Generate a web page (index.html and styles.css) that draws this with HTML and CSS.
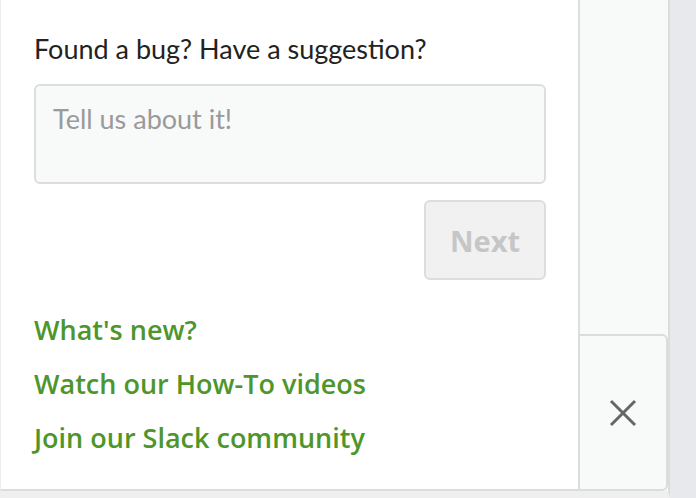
FILE: index.html
```html
<!DOCTYPE html>
<html lang="en">
<head>
    <meta charset="UTF-8">
    <meta name="viewport" content="width=device-width, initial-scale=1.0">
    <title>Feedback</title>
    <link rel="stylesheet" href="styles.css">
</head>
<body>
    <div class="page">
        <div class="sidebar">
            <div class="panel">
                <form class="feedback">
                    <label for="feedbackText" class="feedback-title">Found a bug? Have a suggestion?</label>
                    <textarea id="feedbackText" placeholder="Tell us about it!"></textarea>
                    <div class="actions">
                        <button type="submit" class="next-button" disabled>Next</button>
                    </div>
                </form>

                <ul class="links">
                    <li><a href="#">What's new?</a></li>
                    <li><a href="#">Watch our How-To videos</a></li>
                    <li><a href="#">Join our Slack community</a></li>
                </ul>
            </div>
            <button class="close-tab" aria-label="Close">
                <svg width="30" height="30" viewBox="0 0 30 30">
                    <path d="M3 3 L27 27 M27 3 L3 27" stroke="#666" stroke-width="3" fill="none"/>
                </svg>
            </button>
        </div>
    </div>
</body>
</html>
```

FILE: styles.css
```css
/* Feedback popover */
body {
    margin: 0;
    padding: 0;
    background-color: #e8e9ed;
    font-family: Lato, "Open Sans", sans-serif;
    color: #222;
    overflow: hidden;
}

.page {
    display: flex;
    height: 498px;
}

.sidebar {
    width: 668px;
    height: 491px;
    display: flex;
    align-items: flex-end;
    background-color: #f8f9f9;
    border-right: 2px solid #dcdcdc;
    border-bottom: 7px solid #efefef;
}

.panel {
    width: 580px;
    height: 495px;
    flex-shrink: 0;
    box-sizing: border-box;
    background-color: #fff;
    border-left: 1px solid #eee;
    border-right: 2px solid #dedede;
    border-bottom: 2px solid #dcdcdc;
    border-top-right-radius: 6px;
    padding: 37px 32px 0 33px;
    display: flex;
    flex-direction: column;
}

.feedback {
    display: flex;
    flex-direction: column;
}

.feedback-title {
    font-size: 27px;
    line-height: 32px;
    color: #222;
    margin-bottom: 19px;
}

textarea {
    height: 100px;
    box-sizing: border-box;
    border: 2px solid #ddd;
    border-radius: 6px;
    background-color: #f8f9f9;
    padding: 16px 17px;
    font-family: Lato, sans-serif;
    font-size: 27px;
    resize: none;
}

textarea::placeholder {
    color: #9a9a9a;
}

.actions {
    display: flex;
    justify-content: flex-end;
    margin-top: 16px;
}

.next-button {
    width: 122px;
    height: 80px;
    border: 2px solid #ddd;
    border-radius: 6px;
    background-color: #f1f1f1;
    color: #c6c6c6;
    font-family: "Open Sans", sans-serif;
    font-weight: 700;
    font-size: 29px;
}

.links {
    list-style-type: none;
    padding: 0;
    margin: 35px 0 0;
}

.links li {
    height: 54px;
    line-height: 30px;
}

.links a {
    color: #4e962b;
    text-decoration: none;
    font-family: "Open Sans", sans-serif;
    font-weight: 600;
    font-size: 27px;
}

.close-tab {
    width: 90px;
    height: 157px;
    margin-left: -2px;
    flex-shrink: 0;
    box-sizing: border-box;
    background-color: #f8f9f9;
    border: 2px solid #dcdcdc;
    border-radius: 0 6px 6px 0;
    display: flex;
    align-items: center;
    justify-content: center;
    padding: 0;
    cursor: pointer;
}
```
